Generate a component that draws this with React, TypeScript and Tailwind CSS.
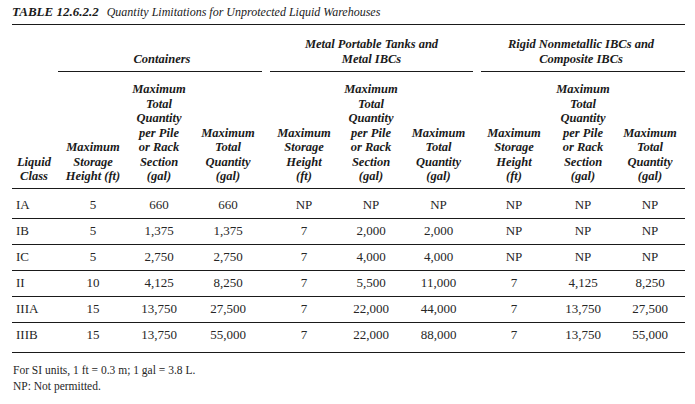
import React from "react";

const COLS = "grid grid-cols-[46px_70px_62px_76px_76px_58px_77px_74px_64px_70px]";

const rows: string[][] = [
  ["IA", "5", "660", "660", "NP", "NP", "NP", "NP", "NP", "NP"],
  ["IB", "5", "1,375", "1,375", "7", "2,000", "2,000", "NP", "NP", "NP"],
  ["IC", "5", "2,750", "2,750", "7", "4,000", "4,000", "NP", "NP", "NP"],
  ["II", "10", "4,125", "8,250", "7", "5,500", "11,000", "7", "4,125", "8,250"],
  ["IIIA", "15", "13,750", "27,500", "7", "22,000", "44,000", "7", "13,750", "27,500"],
  ["IIIB", "15", "13,750", "55,000", "7", "22,000", "88,000", "7", "13,750", "55,000"],
];

const pile = ["Maximum", "Total", "Quantity", "per Pile", "or Rack", "Section", "(gal)"];
const total = ["Maximum", "Total", "Quantity", "(gal)"];
const height = ["Maximum", "Storage", "Height", "(ft)"];

const colHeads: string[][] = [
  ["Maximum", "Storage", "Height (ft)"],
  pile,
  total,
  height,
  pile,
  total,
  height,
  pile,
  total,
];

function Lines({ lines }: { lines: string[] }) {
  return (
    <>
      {lines.map((l, i) => (
        <div key={i} className="whitespace-nowrap">
          {l}
        </div>
      ))}
    </>
  );
}

export default function App() {
  return (
    <div
      className="w-[695px] h-[404px] bg-white text-[#1a1a1a] pl-[12px] pt-[4px]"
      style={{ fontFamily: '"Liberation Serif", "Times New Roman", serif' }}
    >
      <div className="w-[673px]">
        <div className="h-[16px] flex items-baseline whitespace-nowrap leading-[16px]">
          <span className="font-bold italic text-[13px]">TABLE 12.6.2.2</span>
          <span className="italic ml-[8px] text-[12px]">
            Quantity Limitations for Unprotected Liquid Warehouses
          </span>
        </div>
        <div className="mt-[4px] h-px bg-[#1a1a1a]" />

        {/* Header */}
        <div
          className={`${COLS} border-b border-[#1a1a1a] font-bold italic text-[12.5px] leading-[14.5px] text-center`}
        >
          <div className="row-span-2 self-end pb-[4px] pr-[2px]">
            <Lines lines={["Liquid", "Class"]} />
          </div>
          <div className="col-span-3 self-end pt-[12px] flex flex-col justify-end">
            <Lines lines={["Containers"]} />
            <div className="mt-[5px] h-px bg-[#1a1a1a] mr-[4px]" />
          </div>
          <div className="col-span-3 self-end pt-[12px] flex flex-col justify-end">
            <Lines lines={["Metal Portable Tanks and", "Metal IBCs"]} />
            <div className="mt-[5px] h-px bg-[#1a1a1a] mx-[4px]" />
          </div>
          <div className="col-span-3 self-end pt-[12px] flex flex-col justify-end">
            <Lines lines={["Rigid Nonmetallic IBCs and", "Composite IBCs"]} />
            <div className="mt-[5px] h-px bg-[#1a1a1a] ml-[4px]" />
          </div>
          {colHeads.map((h, i) => (
            <div key={i} className="self-end pt-[10px] pb-[4px] flex flex-col items-center">
              <Lines lines={h} />
            </div>
          ))}
        </div>

        {/* Body */}
        {rows.map((r, ri) => (
          <div
            key={ri}
            className={`${COLS} border-b border-[#1a1a1a] text-[13px] text-[#262626] ${
              ri === 0 ? "pt-[4px]" : ""
            } ${ri === rows.length - 1 ? "pb-[4px]" : ""}`}
          >
            {r.map((c, ci) => (
              <div
                key={ci}
                className={`h-[25px] flex items-center whitespace-nowrap ${
                  ci === 0 ? "justify-start pl-[4px]" : "justify-center"
                }`}
              >
                {c}
              </div>
            ))}
          </div>
        ))}

        {/* Footer */}
        <div className="mt-[9px] pl-[1px] text-[11.5px] leading-[16.5px] text-[#262626]">
          <div>For SI units, 1 ft = 0.3 m; 1 gal = 3.8 L.</div>
          <div>NP: Not permitted.</div>
        </div>
      </div>
    </div>
  );
}
